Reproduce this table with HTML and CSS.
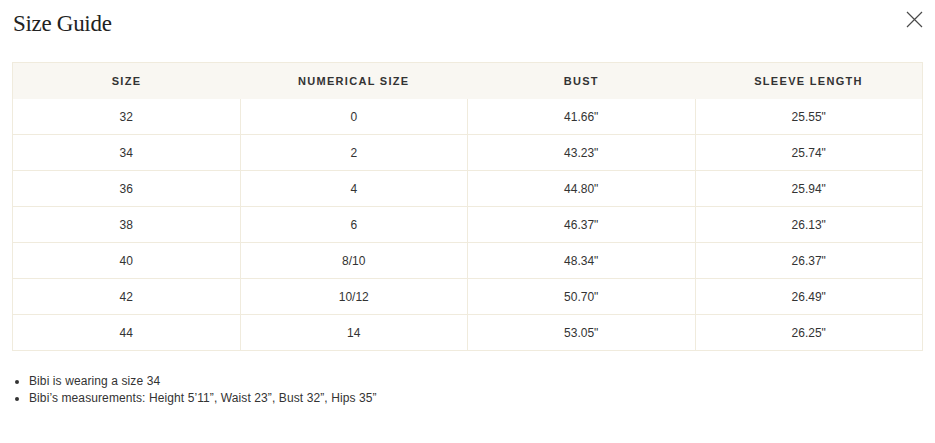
FILE: index.html
```html
<!DOCTYPE html>
<html>
<head>
<meta charset="utf-8">
<link rel="stylesheet" href="styles.css">
</head>
<body>
<div class="modal">
  <div class="head">
    <h1 class="title">Size Guide</h1>
    <button class="close" aria-label="Close">
      <svg width="17" height="17" viewBox="0 0 17 17"><path d="M1 1L16 16M16 1L1 16" stroke="#4a4a4a" stroke-width="1.2" fill="none"/></svg>
    </button>
  </div>
  <table class="guide">
    <thead>
      <tr><th>SIZE</th><th>NUMERICAL SIZE</th><th>BUST</th><th>SLEEVE LENGTH</th></tr>
    </thead>
    <tbody>
      <tr><td>32</td><td>0</td><td>41.66"</td><td>25.55"</td></tr>
      <tr><td>34</td><td>2</td><td>43.23"</td><td>25.74"</td></tr>
      <tr><td>36</td><td>4</td><td>44.80"</td><td>25.94"</td></tr>
      <tr><td>38</td><td>6</td><td>46.37"</td><td>26.13"</td></tr>
      <tr><td>40</td><td>8/10</td><td>48.34"</td><td>26.37"</td></tr>
      <tr><td>42</td><td>10/12</td><td>50.70"</td><td>26.49"</td></tr>
      <tr><td>44</td><td>14</td><td>53.05"</td><td>26.25"</td></tr>
    </tbody>
  </table>
  <ul class="notes">
    <li>Bibi is wearing a size 34</li>
    <li>Bibi’s measurements: Height 5’11”, Waist 23”, Bust 32”, Hips 35”</li>
  </ul>
</div>
</body>
</html>
```
FILE: styles.css
```css
html, body { margin: 0; padding: 0; background: #fff; }
body { font-family: "Liberation Sans", Arial, sans-serif; color: #2b2b2b; }
.modal { padding: 0 12px 0 12px; }
.head { display: flex; justify-content: space-between; align-items: flex-start; height: 62px; }
.title { margin: 11px 0 0 1px; font-family: "Liberation Serif", "Times New Roman", serif; font-weight: 400; font-size: 23px; line-height: 26px; color: #222; letter-spacing: -0.3px; }
.close { margin: 11px 0 0 0; padding: 0; border: 0; background: none; width: 17px; height: 17px; }
.close svg { display: block; }
.guide { width: 911px; border-collapse: collapse; table-layout: fixed; border: 1px solid #f0ebdd; }
.guide th { background: #f9f7f2; height: 36px; font-size: 11px; font-weight: 700; letter-spacing: 1.3px; color: #333; text-align: center; padding: 0; border: 0; }
.guide td { height: 35px; font-size: 12px; color: #333; text-align: center; padding: 0; border: 1px solid #f0ebdd; }
.guide tbody tr:first-child td { border-top: 0; }
.notes { margin: 22px 0 0 0; padding: 0 0 0 17px; font-size: 12px; line-height: 17px; color: #333; letter-spacing: 0.1px; }
```
